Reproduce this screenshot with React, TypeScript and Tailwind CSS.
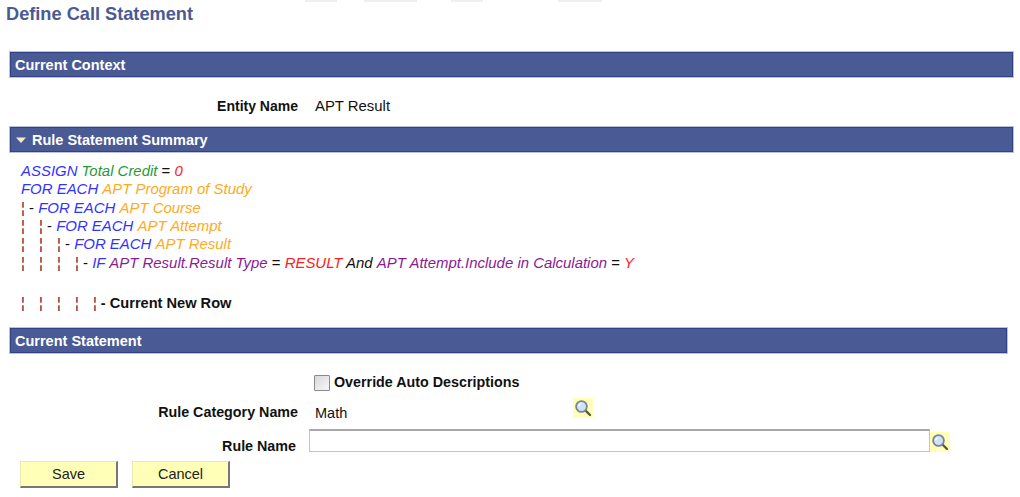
const blue = "text-[#3333ff]"
const orange = "text-[#ffaa22]"
const purple = "text-[#8a1a96]"
const red = "text-[#ff2020]"
const dash = "text-[#4a1438]"

function Bar({ title, arrow, width }: { title: string; arrow?: boolean; width: string }) {
    return (
        <div className={`${width} ml-[10px] h-[25px] flex items-center pl-[4px] pt-px bg-[#4a5a94] border border-[#2f4285] outline outline-1 outline-[#b9c2da]`}>
            {arrow && (
                <svg width="12" height="8" viewBox="0 0 12 8" className="mr-[5px]">
                    <path d="M1 1.5h10L6 7z" fill="#f0ead0" />
                </svg>
            )}
            <span className="text-white font-bold text-[14.5px] leading-none">{title}</span>
        </div>
    )
}

function Dashes({ count }: { count: number }) {
    return (
        <>
            {Array.from({ length: count }).map((_, i) => (
                <span key={i} className={`w-[18px] shrink-0 not-italic font-normal ${dash}`}>¦</span>
            ))}
        </>
    )
}

function Branch() {
    return (
        <>
            <span className={`not-italic ${dash}`}>¦</span>
            <span className="not-italic"> - </span>
        </>
    )
}

function TreeRow({ depth, children }: { depth: number; children: React.ReactNode }) {
    return (
        <div className="flex items-center h-[18.4px] whitespace-pre italic text-[14.95px] leading-none">
            <Dashes count={depth} />
            {children}
        </div>
    )
}

function Lookup({ className }: { className?: string }) {
    return (
        <span className={`w-[20px] h-[20px] bg-[#ffffb8] flex items-center justify-center shrink-0 ${className ?? ""}`}>
            <svg width="18" height="18" viewBox="0 0 18 18">
                <path d="M11 11l5 5" stroke="#5a5a3a" strokeWidth="2.4" strokeLinecap="round" />
                <circle cx="7.5" cy="7.5" r="5.4" fill="#cfe2fa" stroke="#7a8494" strokeWidth="1.8" />
                <path d="M4.8 7.2a3 3 0 0 1 2.6-2.6" stroke="#fff" strokeWidth="1.4" fill="none" />
            </svg>
        </span>
    )
}

function YellowButton({ label }: { label: string }) {
    return (
        <button className="w-[98px] h-[27px] pt-px bg-[#ffffb8] border border-t-[#e8e8b0] border-l-[#e8e8b0] border-r-2 border-b-2 border-r-[#777] border-b-[#777] text-[14.5px] text-[#222]">
            {label}
        </button>
    )
}

export default function App() {
    return (
        <div className="w-[1020px] h-[497px] bg-white overflow-hidden font-['Liberation_Sans',Arial,sans-serif] text-[#111]">
            {/* tabs cut off at the top of the shot */}
            <div className="flex h-[2px] pl-[305px]">
                <div className="w-[32px] bg-[#efefef]" />
                <div className="w-[53px] ml-[27px] bg-[#efefef]" />
                <div className="w-[32px] ml-[34px] bg-[#efefef]" />
                <div className="w-[44px] ml-[75px] bg-[#efefef]" />
            </div>
            <h1 className="ml-[6px] mt-[2px] h-[20px] leading-[20px] font-bold text-[18.2px] text-[#4a5a94]">Define Call Statement</h1>

            <div className="mt-[28px]">
                <Bar title="Current Context" width="w-[1003px]" />
            </div>

            <div className="flex items-center h-[50px] pt-[8px]">
                <div className="w-[298px] text-right font-bold text-[14px]">Entity Name</div>
                <div className="ml-[17px] pt-px text-[14.9px]">APT Result</div>
            </div>

            <Bar title="Rule Statement Summary" arrow width="w-[1003px]" />

            <div className="ml-[21px] mt-[10px]">
                <TreeRow depth={0}><span className={blue}>ASSIGN </span><span className="text-[#1f9a3c]">Total Credit</span><span className="not-italic"> = </span><span className={red}>0</span></TreeRow>
                <TreeRow depth={0}><span className={blue}>FOR EACH </span><span className={orange}>APT Program of Study</span></TreeRow>
                <TreeRow depth={0}><Branch /><span className={blue}>FOR EACH </span><span className={orange}>APT Course</span></TreeRow>
                <TreeRow depth={1}><Branch /><span className={blue}>FOR EACH </span><span className={orange}>APT Attempt</span></TreeRow>
                <TreeRow depth={2}><Branch /><span className={blue}>FOR EACH </span><span className={orange}>APT Result</span></TreeRow>
                <TreeRow depth={3}><Branch /><span className={blue}>IF </span><span className={purple}>APT Result.Result Type</span><span className="not-italic"> = </span><span className={red}>RESULT</span><span> And </span><span className={purple}>APT Attempt.Include in Calculation</span><span className="not-italic"> = </span><span className={red}>Y</span></TreeRow>
                <div className="flex items-center h-[18.4px] mt-[22px] whitespace-pre text-[14.6px] leading-none">
                    <Dashes count={4} />
                    <span className={dash}>¦ </span>
                    <span className="font-bold">- Current New Row</span>
                </div>
            </div>

            <div className="mt-[15.4px]">
                <Bar title="Current Statement" width="w-[997px]" />
            </div>

            <div className="flex items-center h-[19px] mt-[20px] ml-[314px]">
                <span className="w-[16px] h-[16px] border border-[#8a8a8a] bg-gradient-to-br from-[#d8d8d8] to-[#f8f8f8] rounded-[1px]" />
                <span className="ml-[4px] font-bold text-[14.3px]">Override Auto Descriptions</span>
            </div>

            <div className="flex items-start h-[20px] mt-[6px]">
                <div className="w-[298px] pt-[6px] text-right font-bold text-[14.3px] leading-4">Rule Category Name</div>
                <div className="ml-[17px] w-[258px] pt-[7px] text-[14.5px] leading-4">Math</div>
                <Lookup />
            </div>

            <div className="flex items-start h-[24px] mt-[11px]">
                <div className="w-[296px] pt-[9px] text-right font-bold text-[14.3px] leading-4">Rule Name</div>
                <input type="text" className="ml-[13px] w-[621px] h-[23px] bg-white border border-[#c4c4c4] border-t-2 border-t-[#a8a8a8]" />
                <Lookup className="mt-[3px]" />
            </div>

            <div className="flex gap-[14px] ml-[20px] mt-[8px]">
                <YellowButton label="Save" />
                <YellowButton label="Cancel" />
            </div>
        </div>
    )
}
